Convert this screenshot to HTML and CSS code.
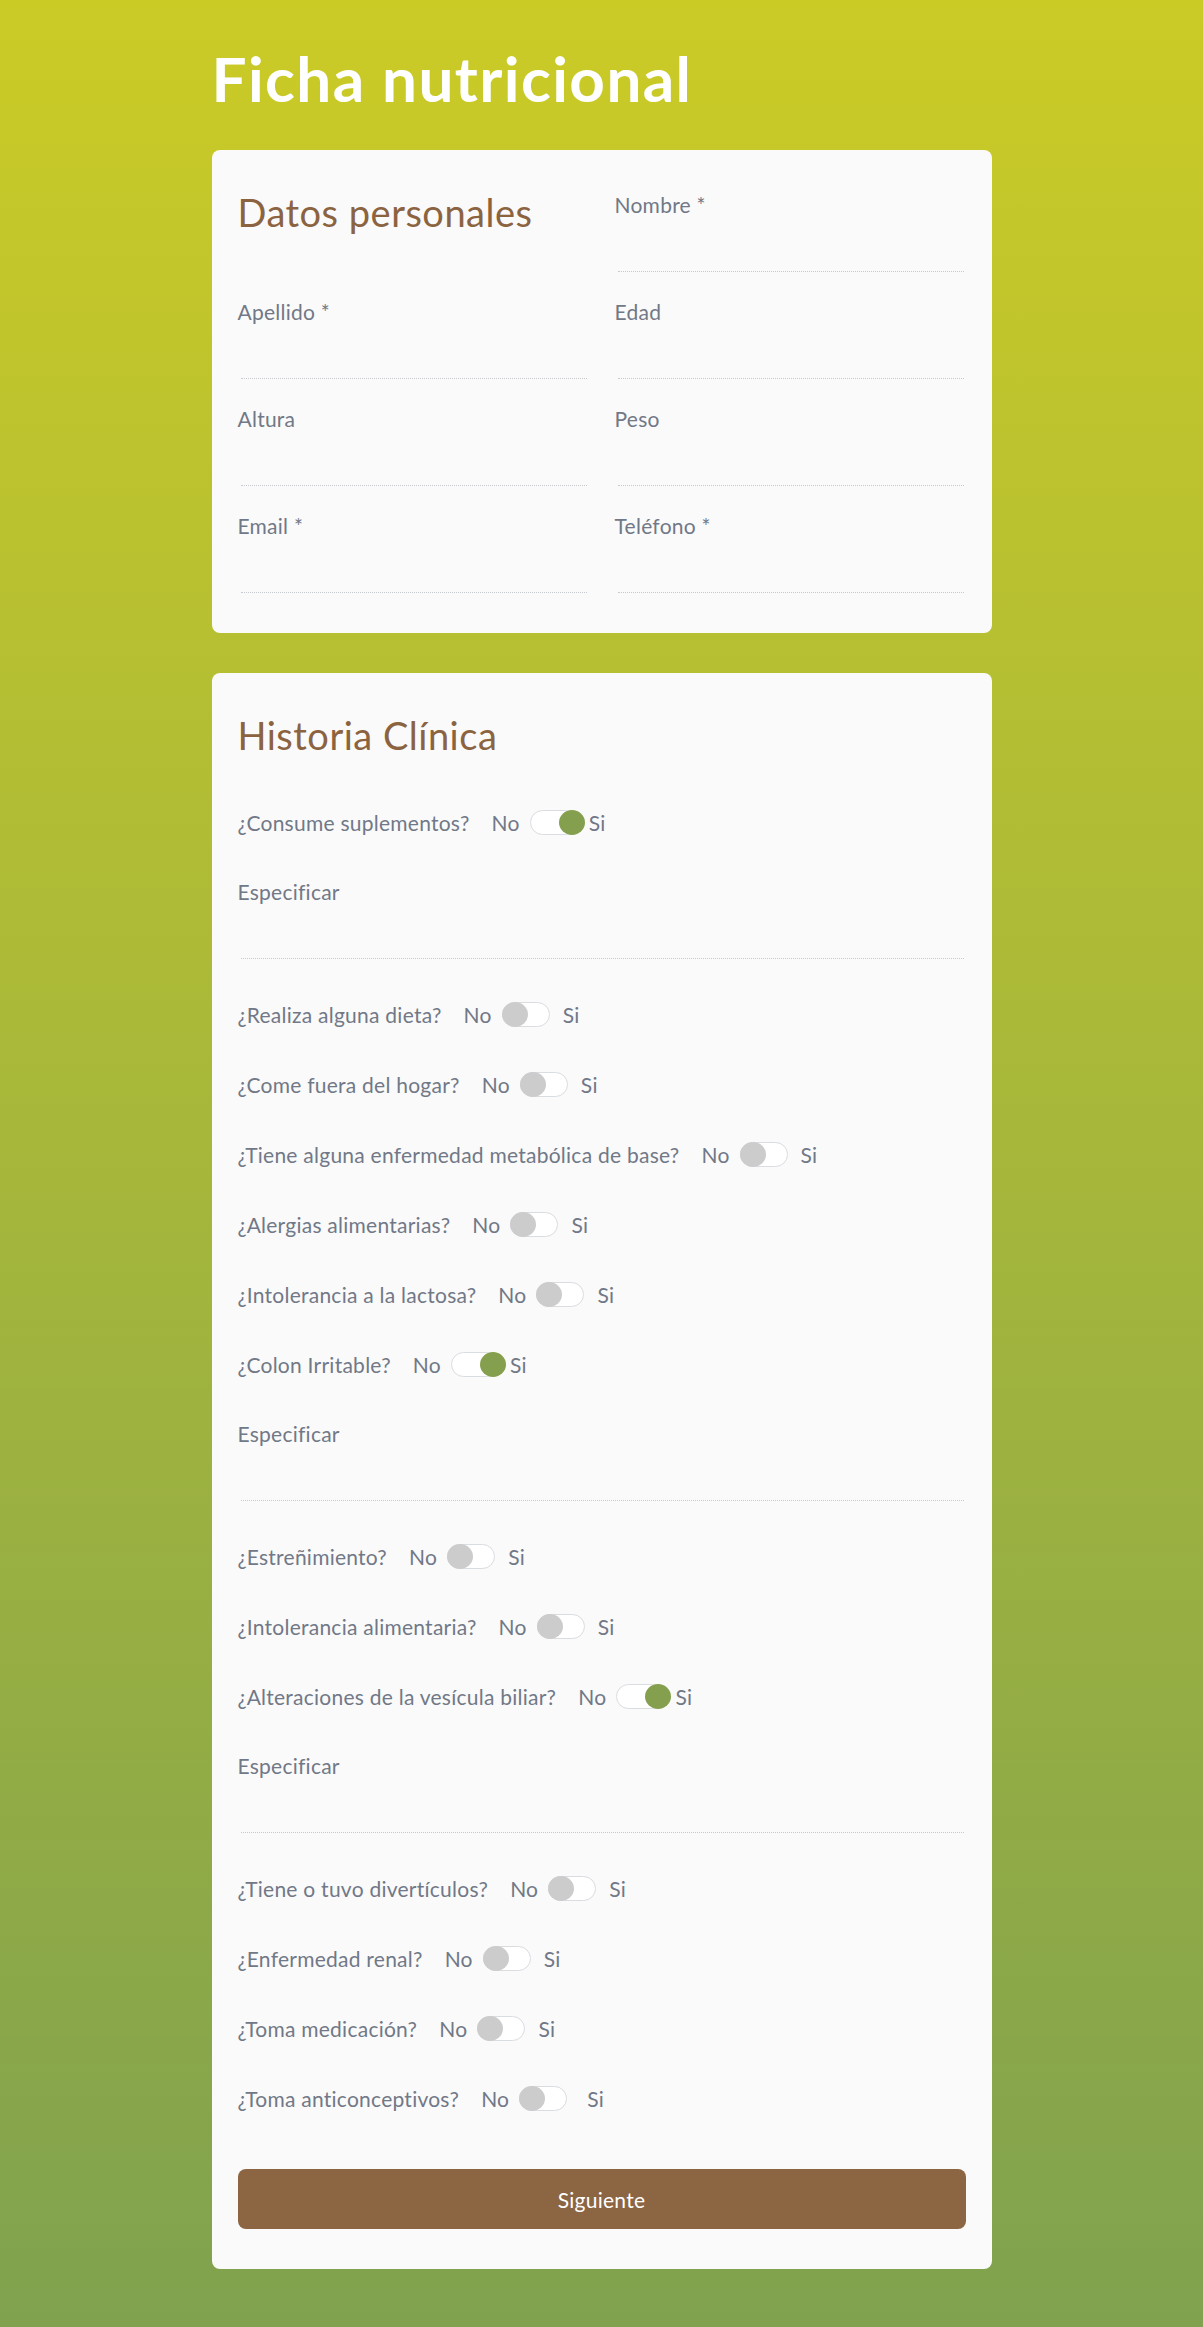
FILE: index.html
```html
<!DOCTYPE html>
<html lang="es">
<head>
<meta charset="utf-8">
<title>Ficha nutricional</title>
<link rel="stylesheet" href="styles.css">
</head>
<body>
<main class="page">
  <h1 class="title">Ficha nutricional</h1>

  <section class="card">
    <div class="grid">
      <h2 class="card-title">Datos personales</h2>
      <div class="field"><label class="label">Nombre *</label><div class="input"></div></div>
      <div class="field"><label class="label">Apellido *</label><div class="input"></div></div>
      <div class="field"><label class="label">Edad</label><div class="input"></div></div>
      <div class="field"><label class="label">Altura</label><div class="input"></div></div>
      <div class="field"><label class="label">Peso</label><div class="input"></div></div>
      <div class="field"><label class="label">Email *</label><div class="input"></div></div>
      <div class="field"><label class="label">Teléfono *</label><div class="input"></div></div>
    </div>
  </section>

  <section class="card">
    <div class="stack">
      <h2 class="card-title">Historia Clínica</h2>

      <div class="row"><span class="q">¿Consume suplementos?</span><span class="no">No</span><span class="switch on"><span class="knob"></span></span><span class="si">Si</span></div>
      <div class="field"><label class="label">Especificar</label><div class="input"></div></div>

      <div class="row"><span class="q">¿Realiza alguna dieta?</span><span class="no">No</span><span class="switch"><span class="knob"></span></span><span class="si">Si</span></div>
      <div class="row"><span class="q">¿Come fuera del hogar?</span><span class="no">No</span><span class="switch"><span class="knob"></span></span><span class="si">Si</span></div>
      <div class="row"><span class="q">¿Tiene alguna enfermedad metabólica de base?</span><span class="no">No</span><span class="switch"><span class="knob"></span></span><span class="si">Si</span></div>
      <div class="row"><span class="q">¿Alergias alimentarias?</span><span class="no">No</span><span class="switch"><span class="knob"></span></span><span class="si">Si</span></div>
      <div class="row"><span class="q">¿Intolerancia a la lactosa?</span><span class="no">No</span><span class="switch"><span class="knob"></span></span><span class="si">Si</span></div>
      <div class="row"><span class="q">¿Colon Irritable?</span><span class="no">No</span><span class="switch on"><span class="knob"></span></span><span class="si">Si</span></div>
      <div class="field"><label class="label">Especificar</label><div class="input"></div></div>

      <div class="row"><span class="q">¿Estreñimiento?</span><span class="no">No</span><span class="switch"><span class="knob"></span></span><span class="si">Si</span></div>
      <div class="row"><span class="q">¿Intolerancia alimentaria?</span><span class="no">No</span><span class="switch"><span class="knob"></span></span><span class="si">Si</span></div>
      <div class="row"><span class="q">¿Alteraciones de la vesícula biliar?</span><span class="no">No</span><span class="switch on"><span class="knob"></span></span><span class="si">Si</span></div>
      <div class="field"><label class="label">Especificar</label><div class="input"></div></div>

      <div class="row"><span class="q">¿Tiene o tuvo divertículos?</span><span class="no">No</span><span class="switch"><span class="knob"></span></span><span class="si">Si</span></div>
      <div class="row"><span class="q">¿Enfermedad renal?</span><span class="no">No</span><span class="switch"><span class="knob"></span></span><span class="si">Si</span></div>
      <div class="row"><span class="q">¿Toma medicación?</span><span class="no">No</span><span class="switch"><span class="knob"></span></span><span class="si">Si</span></div>
      <div class="row"><span class="q">¿Toma anticonceptivos?</span><span class="no">No</span><span class="switch"><span class="knob"></span></span><span class="si si-wide">Si</span></div>

      <button class="btn" type="button">Siguiente</button>
    </div>
  </section>
</main>
</body>
</html>
```

FILE: styles.css
```css
* { box-sizing: border-box; }

html, body {
  margin: 0;
  padding: 0;
}

body {
  min-height: 2327px;
  background: linear-gradient(to bottom, #cbcb26 0%, #80a24f 100%);
  font-family: "Lato", "Open Sans", sans-serif;
  color: #717887;
}

.page {
  width: 780px;
  margin: 0 auto;
  padding: 42px 0 60px;
}

.title {
  margin: 0 0 35px;
  font-size: 62px;
  line-height: 73px;
  font-weight: 700;
  letter-spacing: 1.4px;
  color: #ffffff;
}

.card {
  background: #fafafa;
  border-radius: 8px;
  padding: 40px 26px;
  margin-bottom: 40px;
}

.card:last-child { margin-bottom: 0; }

.grid {
  display: grid;
  grid-template-columns: 1fr 1fr;
  column-gap: 26px;
  row-gap: 25px;
}

.card-title {
  margin: 0;
  font-size: 38px;
  line-height: 44px;
  font-weight: 400;
  letter-spacing: 0.5px;
  color: #8b6340;
}

.stack {
  display: flex;
  flex-direction: column;
  gap: 40px;
}

.stack .card-title { margin-bottom: 10px; }

.field { display: flex; flex-direction: column; }

.label {
  display: block;
  font-size: 21px;
  line-height: 30px;
  letter-spacing: 0.25px;
  color: #717887;
}

.input {
  height: 52px;
  margin: 0 2px 0 3px;
  border-bottom: 1px dotted #c6c9ce;
}

.row {
  display: flex;
  align-items: center;
  height: 30px;
  font-size: 21px;
  letter-spacing: 0.25px;
}

.q { margin-right: 22px; }

.no { margin-right: 10px; }

.switch {
  position: relative;
  width: 48px;
  height: 25px;
  border: 1px solid #d9dce1;
  border-radius: 13px;
  background: #ffffff;
}

.knob {
  position: absolute;
  top: -1px;
  left: -1px;
  width: 26px;
  height: 25px;
  border-radius: 50%;
  background: #cccccc;
}

.switch.on .knob {
  left: 28px;
  background: #84a04e;
}

.si { margin-left: 13px; }
.switch.on + .si { margin-left: 11px; }
.si-wide { margin-left: 20px; }

.btn {
  margin-top: 16px;
  height: 60px;
  width: 100%;
  border: 0;
  border-radius: 8px;
  background: #8c6543;
  color: #ffffff;
  font-family: "Lato", "Open Sans", sans-serif;
  font-size: 21px;
  letter-spacing: 0.25px;
}
```
